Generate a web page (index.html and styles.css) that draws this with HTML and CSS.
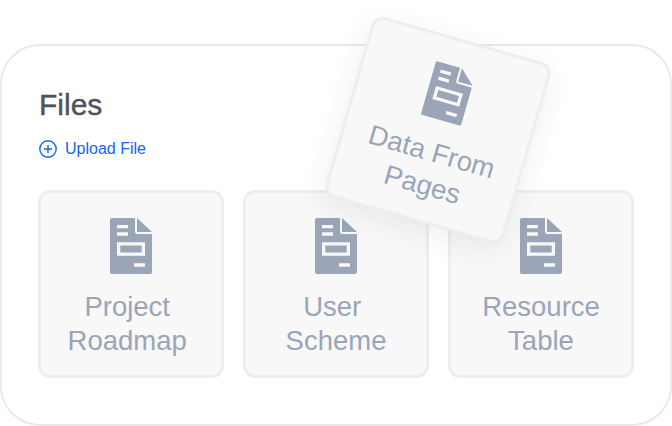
FILE: index.html
```html
<!DOCTYPE html>
<html lang="en">
<head>
<meta charset="utf-8">
<title>Files</title>
<link rel="stylesheet" href="styles.css">
</head>
<body>
<svg class="sprite" width="0" height="0" aria-hidden="true">
  <symbol id="doc" viewBox="0 0 42 56">
    <path fill-rule="evenodd" d="M2 0H25V13.500C25 15 26 16 27.500 16H42V54C42 55.200 41.200 56 40 56H2C.8 56 0 55.200 0 54V2C0 .8.8 0 2 0ZM7 7V10.300H18V7ZM7 14.300V17.700H18V14.300ZM7 24.300V37.700H35V24.300ZM10.300 27.500H31.700V34.500H10.300ZM24 45.300V48.700H35V45.300Z"/>
    <path d="M27 0 42 14H27Z"/>
  </symbol>
</svg>
<main class="panel">
  <h1 class="title">Files</h1>
  <a class="upload" href="#">
    <svg class="upload-icon" viewBox="0 0 18 18" aria-hidden="true">
      <circle cx="9" cy="9" r="8.200"/>
      <path d="M9 5V13M5 9H13"/>
    </svg>
    Upload File
  </a>
  <div class="grid">
    <div class="card"><svg class="doc"><use href="#doc"/></svg><span class="label">Project&nbsp;<br>Roadmap&nbsp;</span></div>
    <div class="card"><svg class="doc"><use href="#doc"/></svg><span class="label">User&nbsp;<br>Scheme</span></div>
    <div class="card"><svg class="doc"><use href="#doc"/></svg><span class="label">Resource<br>Table</span></div>
  </div>
</main>
<div class="card card-float"><svg class="doc"><use href="#doc"/></svg><span class="label">Data From<br>Pages</span></div>
</body>
</html>
```
FILE: styles.css
```css
html, body {
  margin: 0;
  padding: 0;
  background: #fff;
}
body {
  position: relative;
  width: 672px;
  height: 426px;
  overflow: hidden;
  font-family: "Liberation Sans", Arial, sans-serif;
}
.sprite {
  position: absolute;
}
.panel {
  box-sizing: border-box;
  margin-top: 44px;
  height: 382px;
  padding: 41px 36px 0;
  border: 2px solid #e9e9e9;
  border-radius: 40px;
  background: #fff;
}
.title {
  margin: 0 0 0 1px;
  font-size: 30px;
  line-height: 36px;
  font-weight: 400;
  color: #50525f;
  -webkit-text-stroke: 0.4px #50525f;
}
.upload {
  display: flex;
  align-items: center;
  gap: 8px;
  margin: 16px 0 0 1px;
  height: 20px;
  font-size: 16px;
  color: #1464f4;
  text-decoration: none;
}
.upload-icon {
  width: 18px;
  height: 18px;
  fill: none;
  stroke: #1464f4;
  stroke-width: 1.400;
}
.grid {
  display: grid;
  grid-template-columns: 186px 186px 186px;
  column-gap: 19px;
  margin-top: 31px;
}
.card {
  box-sizing: border-box;
  display: flex;
  flex-direction: column;
  align-items: center;
  width: 186px;
  height: 188px;
  padding-top: 25px;
  border: 3px solid #eeeeee;
  border-radius: 12px;
  background: #f8f8f8;
}
.doc {
  width: 42px;
  height: 56px;
  fill: #9aa5b8;
}
.label {
  margin-top: 16px;
  font-size: 27.500px;
  line-height: 34px;
  text-align: center;
  color: #9aa5b8;
}
.card-float {
  position: absolute;
  left: 345px;
  top: 36px;
  transform: rotate(16deg);
  box-shadow: 0 8px 28px rgba(40, 50, 70, 0.08);
}
```
